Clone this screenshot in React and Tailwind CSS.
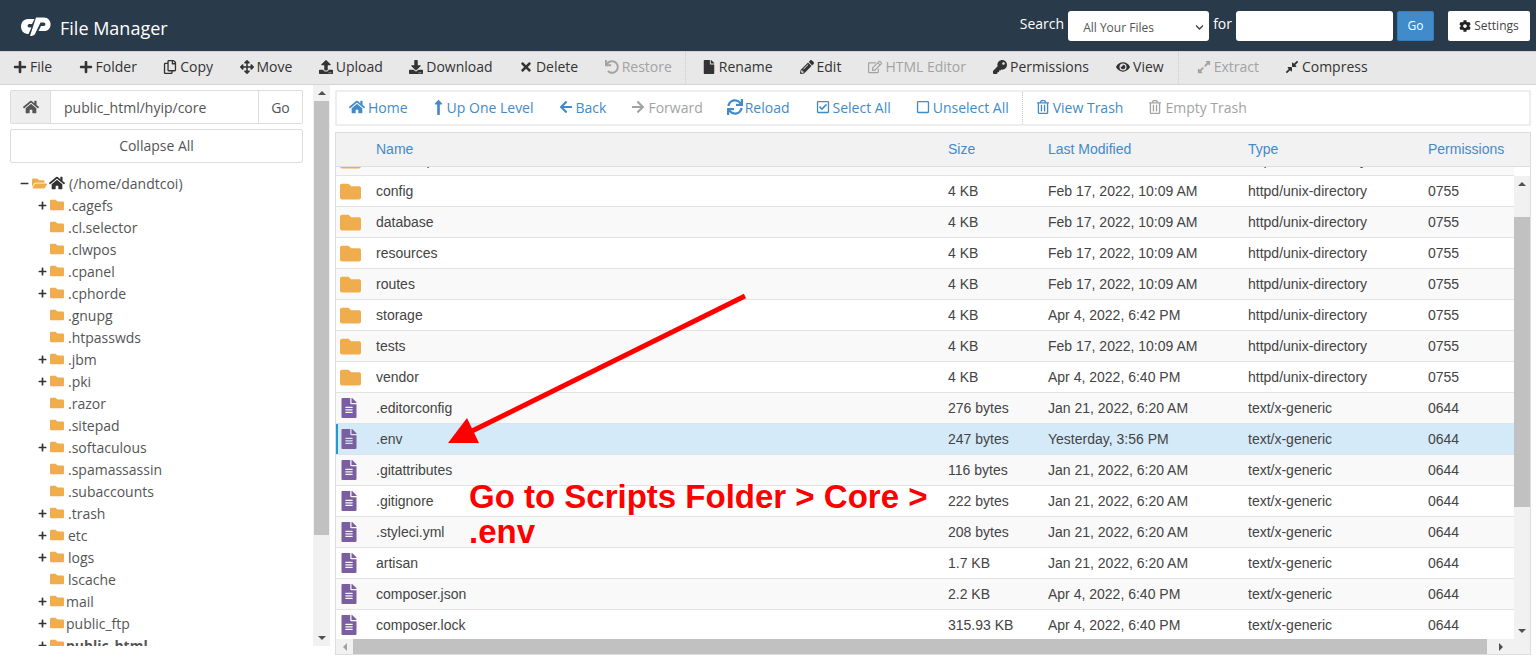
import React from 'react';
import {
  FaPlus, FaRegCopy, FaArrowsAlt, FaUpload, FaDownload, FaTimes, FaUndo, FaFile, FaPencilAlt, FaRegEdit,
  FaKey, FaEye, FaExpandAlt, FaCompressAlt, FaHome, FaLongArrowAltUp, FaArrowLeft, FaArrowRight, FaSync,
  FaRegCheckSquare, FaRegSquare, FaRegTrashAlt, FaCog, FaFolder, FaFolderOpen, FaFileAlt, FaMinus, FaChevronDown,
} from 'react-icons/fa';

const sans = "font-['Open_Sans',sans-serif]";
const arial = "font-['Liberation_Sans',Arial,sans-serif]";

const actionsA = [
  { icon: FaPlus, label: 'File' },
  { icon: FaPlus, label: 'Folder' },
  { icon: FaRegCopy, label: 'Copy' },
  { icon: FaArrowsAlt, label: 'Move' },
  { icon: FaUpload, label: 'Upload' },
  { icon: FaDownload, label: 'Download' },
  { icon: FaTimes, label: 'Delete' },
  { icon: FaUndo, label: 'Restore', off: true },
];
const actionsB = [
  { icon: FaFile, label: 'Rename' },
  { icon: FaPencilAlt, label: 'Edit' },
  { icon: FaRegEdit, label: 'HTML Editor', off: true },
  { icon: FaKey, label: 'Permissions' },
  { icon: FaEye, label: 'View' },
];
const actionsC = [
  { icon: FaExpandAlt, label: 'Extract', off: true },
  { icon: FaCompressAlt, label: 'Compress' },
];

const navA = [
  { icon: FaHome, label: 'Home', size: 16 },
  { icon: FaLongArrowAltUp, label: 'Up One Level', size: 17, cls: '-ml-[3px] !gap-0' },
  { icon: FaArrowLeft, label: 'Back' },
  { icon: FaArrowRight, label: 'Forward', off: true },
  { icon: FaSync, label: 'Reload', size: 16, cls: '-ml-[1px] !gap-[2px]' },
  { icon: FaRegCheckSquare, label: 'Select All', cls: 'ml-[1px]' },
  { icon: FaRegSquare, label: 'Unselect All' },
];
const navB = [
  { icon: FaRegTrashAlt, label: 'View Trash' },
  { icon: FaRegTrashAlt, label: 'Empty Trash', off: true },
];

const tree = [
  ['.cagefs', 1], ['.cl.selector', 0], ['.clwpos', 0], ['.cpanel', 1], ['.cphorde', 1], ['.gnupg', 0],
  ['.htpasswds', 0], ['.jbm', 1], ['.pki', 1], ['.razor', 0], ['.sitepad', 0], ['.softaculous', 1],
  ['.spamassassin', 0], ['.subaccounts', 0], ['.trash', 1], ['etc', 1], ['logs', 1], ['lscache', 0],
  ['mail', 1, 1], ['public_ftp', 1, 1], ['public_html', 1, 1],
];

const dir = 'httpd/unix-directory';
const txt = 'text/x-generic';
const rows = [
  ['bootstrap', '4 KB', 'Feb 17, 2022, 10:09 AM', dir, '0755'],
  ['config', '4 KB', 'Feb 17, 2022, 10:09 AM', dir, '0755'],
  ['database', '4 KB', 'Feb 17, 2022, 10:09 AM', dir, '0755'],
  ['resources', '4 KB', 'Feb 17, 2022, 10:09 AM', dir, '0755'],
  ['routes', '4 KB', 'Feb 17, 2022, 10:09 AM', dir, '0755'],
  ['storage', '4 KB', 'Apr 4, 2022, 6:42 PM', dir, '0755'],
  ['tests', '4 KB', 'Feb 17, 2022, 10:09 AM', dir, '0755'],
  ['vendor', '4 KB', 'Apr 4, 2022, 6:40 PM', dir, '0755'],
  ['.editorconfig', '276 bytes', 'Jan 21, 2022, 6:20 AM', txt, '0644'],
  ['.env', '247 bytes', 'Yesterday, 3:56 PM', txt, '0644'],
  ['.gitattributes', '116 bytes', 'Jan 21, 2022, 6:20 AM', txt, '0644'],
  ['.gitignore', '222 bytes', 'Jan 21, 2022, 6:20 AM', txt, '0644'],
  ['.styleci.yml', '208 bytes', 'Jan 21, 2022, 6:20 AM', txt, '0644'],
  ['artisan', '1.7 KB', 'Jan 21, 2022, 6:20 AM', txt, '0644'],
  ['composer.json', '2.2 KB', 'Apr 4, 2022, 6:40 PM', txt, '0644'],
  ['composer.lock', '315.93 KB', 'Apr 4, 2022, 6:40 PM', txt, '0644'],
];

const gridCols = 'grid grid-cols-[40px_572px_100px_200px_180px_1fr]';

function Logo() {
  return (
    <svg width="30" height="20" viewBox="0 0 30 20" fill="#fff">
      <path d="M13.500 3 L11 8 H8.500 C6 8 6 11.500 8.500 11.500 H10.500 L7.500 18 H7 C-2.300 18 -2.300 3 7 3 Z" />
      <path d="M15 1.500 H23 C31.500 1.500 32 15 23 15 H17.500 L20 10 H22.500 C25 10 25 6.500 22.500 6.500 H19.500 L14 18 C13 19.500 11.500 20 9 20 Z" />
    </svg>
  );
}

function Action({ item, color, offColor }) {
  const Icon = item.icon;
  return (
    <span className={`flex items-center gap-[3px] whitespace-nowrap ${item.off ? offColor : color} ${item.cls || ''}`}>
      <Icon size={item.size || 14} />
      {item.label}
    </span>
  );
}

function Triangle({ dir: d }) {
  if (d === 'up') return <div className="border-x-[4px] border-b-[4px] border-x-transparent border-b-[#505050]" />;
  if (d === 'down') return <div className="border-x-[4px] border-t-[4px] border-x-transparent border-t-[#505050]" />;
  if (d === 'left') return <div className="border-y-[4px] border-r-[4px] border-y-transparent border-r-[#a0a0a0]" />;
  return <div className="border-y-[4px] border-l-[4px] border-y-transparent border-l-[#505050]" />;
}

function TopBar() {
  return (
    <header className={`h-[51px] bg-[#293a4a] flex items-center text-white ${sans}`}>
      <div className="ml-[21px] mr-[9px] flex items-center"><Logo /></div>
      <span className="text-[18px] mt-[5px]">File Manager</span>
      <div className="ml-auto flex items-center mr-[6px] mt-[1px]">
        <span className="text-[14px] mr-[4px] -mt-[6px]">Search</span>
        <div className="w-[141px] h-[30px] bg-white rounded-[3px] text-[#555] text-[12px] flex items-center pl-[15px] pr-[5px] pt-[3px] justify-between">
          All Your Files
          <FaChevronDown size={9} className="text-[#444]" />
        </div>
        <span className="text-[14px] mx-[4px] -mt-[6px]">for</span>
        <div className="w-[157px] h-[30px] bg-white rounded-[3px]" />
        <div className="ml-[4px] w-[37px] h-[30px] bg-[#428bca] border border-[#357ebd] rounded-[2px] text-[12px] flex items-center justify-center">Go</div>
        <div className="ml-[14px] w-[82px] h-[30px] bg-white rounded-[2px] text-[#444] text-[12px] flex items-center justify-center gap-[3px]">
          <FaCog size={12} className="text-[#222]" />
          Settings
        </div>
      </div>
    </header>
  );
}

function ActionBar() {
  return (
    <div className={`h-[34px] bg-[#e8e8e8] border-y border-[#d4d4d4] flex items-center text-[14px] ${sans}`}>
      <div className="flex items-center gap-[26.4px] pl-[13px] pr-[13px] pb-[3px] h-full border-r border-dotted border-[#ccc]">
        {actionsA.map((a) => <Action key={a.label} item={a} color="text-[#333]" offColor="text-[#a3a3a3]" />)}
      </div>
      <div className="flex items-center gap-[27px] pl-[16px] pr-[14px] pb-[3px] h-full border-r border-dotted border-[#ccc]">
        {actionsB.map((a) => <Action key={a.label} item={a} color="text-[#333]" offColor="text-[#a3a3a3]" />)}
      </div>
      <div className="flex items-center gap-[26px] pl-[18px] pb-[3px] h-full">
        {actionsC.map((a) => <Action key={a.label} item={a} color="text-[#333]" offColor="text-[#a3a3a3]" />)}
      </div>
    </div>
  );
}

function Sidebar() {
  return (
    <aside className={`w-[313px] shrink-0 pl-[10px] pr-[10px] pt-[5px] pb-[10px] flex flex-col text-[14px] text-[#555] ${sans}`}>
      <div className="h-[34px] shrink-0 flex border border-[#ddd] rounded-[2px]">
        <div className="w-[40px] bg-[#eee] border-r border-[#ddd] flex items-center justify-center">
          <FaHome size={16} className="text-[#555]" />
        </div>
        <div className="flex-1 pl-[13px] flex items-center">public_html/hyip/core</div>
        <div className="w-[44px] border-l border-[#ddd] flex items-center justify-center">Go</div>
      </div>
      <div className="h-[34px] mt-[5px] pb-[1px] shrink-0 border border-[#ddd] rounded-[2px] flex items-center justify-center">Collapse All</div>
      <div className="mt-[9px] pl-[10px] flex-1 min-h-0 overflow-hidden">
        <div className="h-[22px] flex items-center">
          <FaMinus size={9} className="text-[#333] w-[9px]" />
          <FaFolderOpen size={15} className="text-[#f0ad4e] ml-[3px]" />
          <FaHome size={16} className="text-[#333] ml-[2px]" />
          <span className="ml-[4px]">(/home/dandtcoi)</span>
        </div>
        {tree.map(([name, more, tight]) => (
          <div key={name} className="h-[22px] pl-[18px] flex items-center">
            <span className="w-[9px] shrink-0 flex">{more ? <FaPlus size={9} className="text-[#333]" /> : null}</span>
            <FaFolder size={14} className="text-[#f0ad4e] ml-[3px] shrink-0" />
            <span className={`${tight ? 'ml-[2px]' : 'ml-[4px]'} ${name === 'public_html' ? 'font-bold' : ''}`}>{name}</span>
          </div>
        ))}
      </div>
    </aside>
  );
}

function FileRow({ row, index }) {
  const [name, size, modified, type, perms] = row;
  const isFolder = type === dir;
  const selected = name === '.env';
  const stripe = selected ? 'bg-[#d5eaf8]' : index % 2 === 0 ? 'bg-[#f9f9f9]' : 'bg-white';
  return (
    <div className={`${gridCols} h-[31px] items-center border-b border-[#e2e2e2] text-[14px] text-[#444] ${stripe} ${selected ? 'shadow-[inset_2px_0_0_#1f9ad6]' : ''}`}>
      <span className="flex pl-[4px]">
        {isFolder
          ? <FaFolder size={21} className="text-[#f0ad4e]" />
          : <FaFileAlt size={20} className="text-[#7b5e9f] -ml-[1px]" />}
      </span>
      <span>{name}</span>
      <span>{size}</span>
      <span>{modified}</span>
      <span>{type}</span>
      <span>{perms}</span>
    </div>
  );
}

function FilePane() {
  return (
    <section className="flex-1 min-w-0 pr-[5px] flex flex-col">
      <div className={`h-[36px] mt-[5px] shrink-0 border-2 border-[#eee] bg-white flex items-center text-[14px] ${sans}`}>
        <div className="flex items-center gap-[25px] pl-[12px] pr-[13px] pb-[2px] h-full border-r border-dotted border-[#ccc]">
          {navA.map((a) => <Action key={a.label} item={a} color="text-[#428bca]" offColor="text-[#a3a3a3]" />)}
        </div>
        <div className="flex items-center gap-[25px] pl-[13px] pb-[2px] h-full">
          {navB.map((a) => <Action key={a.label} item={a} color="text-[#428bca]" offColor="text-[#a3a3a3]" />)}
        </div>
      </div>

      <div className={`mt-[6px] h-[523px] flex flex-col border border-[#ddd] ${arial}`}>
        <div className={`${gridCols} h-[34px] shrink-0 items-center bg-[#f2f2f2] border-b border-[#ddd] text-[14px] text-[#428bca]`}>
          <span />
          <span>Name</span>
          <span>Size</span>
          <span>Last Modified</span>
          <span>Type</span>
          <span>Permissions</span>
        </div>
        <div className="flex-1 min-h-0 flex">
          <div className="flex-1 min-w-0 overflow-hidden">
            <div className="-mt-[22px]">
              {rows.map((r, i) => <FileRow key={r[0]} row={r} index={i} />)}
            </div>
          </div>
          <div className="w-[16px] shrink-0 bg-[#f1f1f1] mt-[9px] flex flex-col items-center">
            <div className="h-[16px] flex items-center"><Triangle dir="up" /></div>
            <div className="w-full h-[290px] mt-[25px] bg-[#c1c1c1]" />
            <div className="mt-auto h-[16px] flex items-center"><Triangle dir="down" /></div>
          </div>
        </div>
        <div className="h-[15px] shrink-0 bg-[#f1f1f1] flex items-center">
          <div className="w-[17px] flex justify-center"><Triangle dir="left" /></div>
          <div className="w-[1134px] h-full bg-[#c1c1c1]" />
          <div className="ml-auto mr-[27px] flex"><Triangle dir="right" /></div>
        </div>
      </div>
    </section>
  );
}

export default function App() {
  return (
    <div className="relative h-[656px] overflow-hidden bg-white flex flex-col">
      <TopBar />
      <ActionBar />
      <div className="flex-1 min-h-0 flex">
        <Sidebar />
        <div className="w-[17px] shrink-0 mr-[5px] mb-[10px] bg-[#f1f1f1] flex flex-col items-center">
          <div className="h-[16px] flex items-center"><Triangle dir="up" /></div>
          <div className="w-[15px] h-[434px] bg-[#c1c1c1]" />
          <div className="mt-auto h-[16px] flex items-center"><Triangle dir="down" /></div>
        </div>
        <FilePane />
      </div>

      {/* annotation drawn over the page */}
      <svg className="absolute inset-0 pointer-events-none" width="1536" height="656">
        <line x1="745" y1="296" x2="470" y2="432" stroke="#ff0000" strokeWidth="5" />
        <polygon points="467,418 448,443 479,443" fill="#ff0000" />
      </svg>
      <div className={`absolute left-[469px] top-[479px] w-[480px] text-[33px] leading-[35px] font-bold text-[#ff0000] ${arial}`}>
        Go to Scripts Folder &gt; Core &gt; .env
      </div>
    </div>
  );
}
